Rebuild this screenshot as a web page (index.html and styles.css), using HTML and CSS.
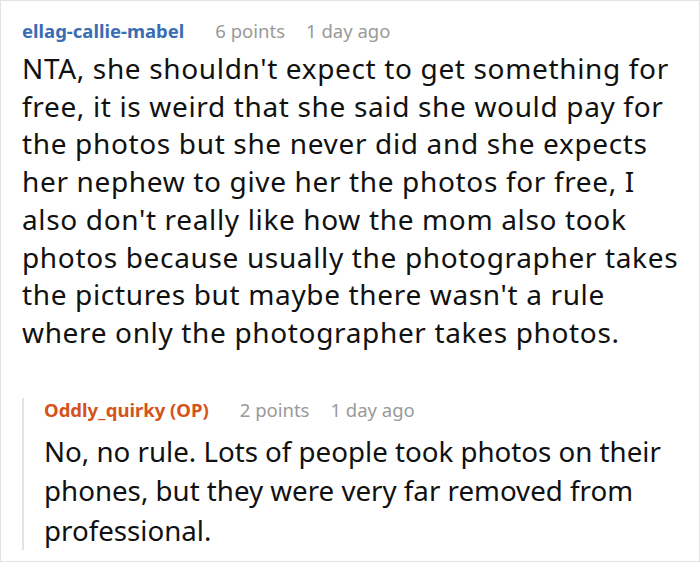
FILE: index.html
```html
<!DOCTYPE html>
<html>
<head>
<meta charset="utf-8">
<link rel="stylesheet" href="styles.css">
</head>
<body>
<div class="card">
  <div class="comment">
    <div class="meta">
      <span class="author">ellag-callie-mabel</span>
      <span class="info">6 points</span>
      <span class="info">1 day ago</span>
    </div>
    <p class="text">NTA, she shouldn't expect to get something for free, it is weird that she said she would pay for the photos but she never did and she expects her nephew to give her the photos for free, I also don't really like how the mom also took photos because usually the photographer takes the pictures but maybe there wasn't a rule where only the photographer takes photos.</p>
    <div class="reply">
      <div class="meta">
        <span class="author op">Oddly_quirky (OP)</span>
        <span class="info">2 points</span>
        <span class="info">1 day ago</span>
      </div>
      <p class="text reply-text">No, no rule. Lots of people took photos on their phones, but they were very far removed from professional.</p>
    </div>
  </div>
</div>
</body>
</html>
```

FILE: styles.css
```css
html, body {
  margin: 0;
  padding: 0;
  background: #fff;
}
.card {
  width: 700px;
  height: 562px;
  box-sizing: border-box;
  border: 1px solid #e2e2e2;
  font-family: "Noto Sans", "Open Sans", sans-serif;
  padding: 18px 0 0 21px;
  overflow: hidden;
}
.meta {
  display: flex;
  gap: 21px;
  font-size: 18.5px;
  line-height: 24px;
}
.author {
  color: #3a6db4;
  font-weight: 700;
  margin-right: 10px;
}
.author.op {
  color: #d4521c;
}
.info {
  color: #999;
}
.text {
  margin: 7px 0 0;
  font-size: 28px;
  letter-spacing: 0.65px;
  line-height: 37.7px;
  color: #111;
  padding-right: 10px;
}
.reply {
  margin-top: 46px;
  border-left: 2px solid #e4e4e4;
  padding-left: 20px;
}
.reply-text {
  margin-top: 10px;
  font-size: 27.7px;
  letter-spacing: 0;
  line-height: 39.5px;
}
```
